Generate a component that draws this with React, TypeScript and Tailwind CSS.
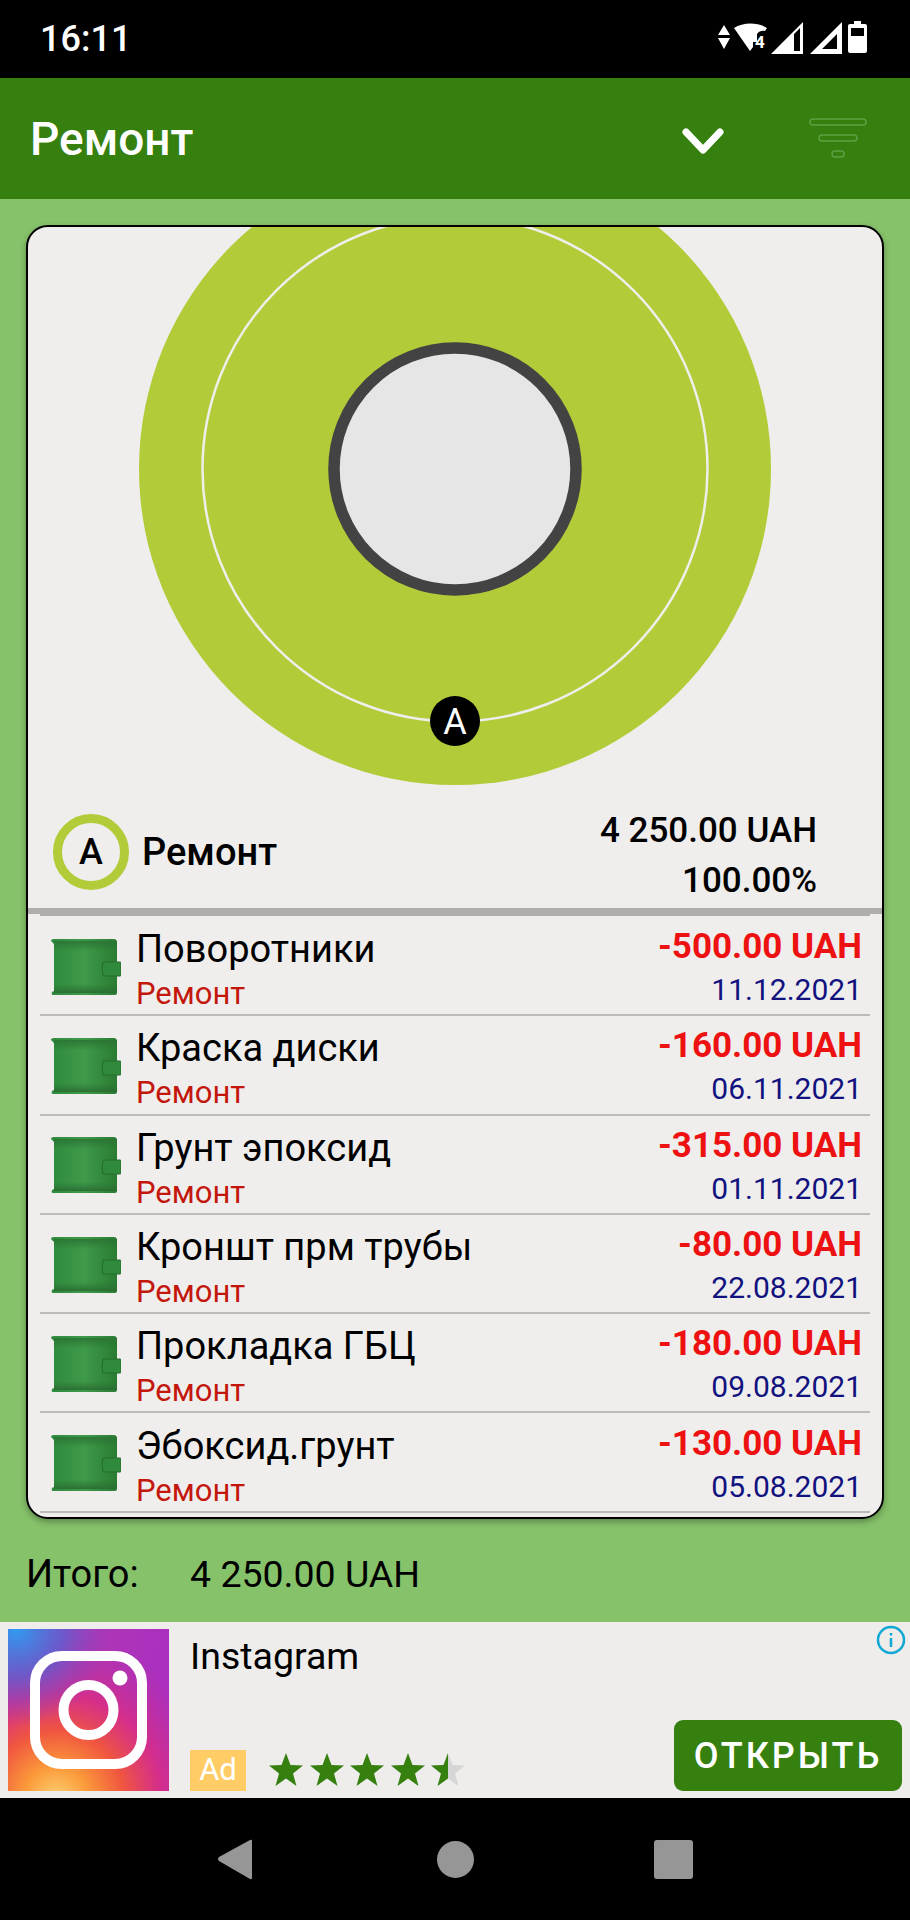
const font = "font-['Roboto','Liberation_Sans',sans-serif]";

const expenses = [
  { title: "Поворотники", amount: "-500.00 UAH", date: "11.12.2021" },
  { title: "Краска диски", amount: "-160.00 UAH", date: "06.11.2021" },
  { title: "Грунт эпоксид", amount: "-315.00 UAH", date: "01.11.2021" },
  { title: "Кроншт прм трубы", amount: "-80.00 UAH", date: "22.08.2021" },
  { title: "Прокладка ГБЦ", amount: "-180.00 UAH", date: "09.08.2021" },
  { title: "Эбоксид.грунт", amount: "-130.00 UAH", date: "05.08.2021" },
];

function StatusIcons() {
  return (
    <svg width="156" height="36" viewBox="0 0 156 36" fill="white">
      <path d="M8 1l6 10H2zM2 14h12L8 25z" transform="translate(0 3)" />
      <path d="M18 7c9-6 24-6 33 0l-2 3q-5-1-8 3v8h-4v5l-3 4z" />
      <text x="39" y="27" fontSize="17" fontWeight="700" fontFamily="Roboto">4</text>
      <path fillRule="evenodd" d="M55 31L87 -1v32zM84 5v23h-6V11z" transform="translate(0 2)" />
      <path fillRule="evenodd" d="M94 31L126 -1v32zM121 11L106 26h15z" transform="translate(0 2)" />
      <path fillRule="evenodd" d="M138 0h7v3h4q2 0 2 2v25q0 2-2 2h-15q-2 0-2-2V5q0-2 2-2h4zM135 7v8h13V7z" />
    </svg>
  );
}

function FilterIcon() {
  return (
    <svg width="60" height="42" viewBox="0 0 60 42" fill="none" stroke="#5da043" strokeWidth="1.5">
      <rect x="2" y="1" width="56" height="6" rx="3" />
      <rect x="11" y="17" width="38" height="6" rx="3" />
      <rect x="24" y="33" width="12" height="6" rx="3" />
    </svg>
  );
}

function DonutChart() {
  return (
    <svg className="block h-[574px] w-full" viewBox="0 0 854 574">
      <circle cx="427" cy="242" r="316" fill="#b2cb38" />
      <circle cx="427" cy="242" r="252.5" fill="none" stroke="#eeeeea" strokeWidth="2.5" />
      <circle cx="427" cy="242" r="121" fill="#e6e6e6" stroke="#434343" strokeWidth="11.5" />
      <circle cx="427" cy="494" r="25" fill="#000000" />
      <text x="427" y="507" textAnchor="middle" fontSize="36" fill="white" fontFamily="Roboto">
        A
      </text>
    </svg>
  );
}

function WalletIcon() {
  return (
    <svg width="70" height="58" viewBox="0 0 70 58" className="shrink-0">
      <defs>
        <linearGradient id="wallet" x1="0" y1="0" x2="1" y2="0">
          <stop offset="0" stopColor="#2e8a3c" />
          <stop offset="0.5" stopColor="#3f9a4a" />
          <stop offset="1" stopColor="#2a7c32" />
        </linearGradient>
        <linearGradient id="walletShade" x1="0" y1="0" x2="0" y2="1">
          <stop offset="0" stopColor="#2a7433" stopOpacity="0.9" />
          <stop offset="0.2" stopColor="#2a7433" stopOpacity="0" />
          <stop offset="0.82" stopColor="#2a7433" stopOpacity="0" />
          <stop offset="1" stopColor="#2a6a32" stopOpacity="0.9" />
        </linearGradient>
      </defs>
      <path d="M0 3q0-2 3-2h60q2 0 3 2v52q0 2-2 2H2q-2 0-1-3l2-1V6z" fill="url(#wallet)" />
      <path d="M3 3h63v52H3z" fill="url(#walletShade)" />
      <path d="M52 24h17q1 0 1 1v12q0 1-1 1H52q-2-7 0-14z" fill="#2f8a3b" stroke="#246c2c" strokeWidth="1" />
    </svg>
  );
}

function InstagramLogo() {
  return (
    <svg width="161" height="162" viewBox="0 0 161 162" className="shrink-0">
      <defs>
        <linearGradient id="igBase" x1="0" y1="0" x2="1" y2="0.15">
          <stop offset="0" stopColor="#b63fa8" />
          <stop offset="1" stopColor="#a92fc0" />
        </linearGradient>
        <radialGradient id="igWarm" cx="0.3" cy="1.05" r="1">
          <stop offset="0" stopColor="#fed373" />
          <stop offset="0.2" stopColor="#fb9a3a" />
          <stop offset="0.42" stopColor="#f0563f" />
          <stop offset="0.65" stopColor="#d92e85" stopOpacity="0.9" />
          <stop offset="1" stopColor="#c32c9c" stopOpacity="0" />
        </radialGradient>
        <radialGradient id="igBlue" cx="0.05" cy="0" r="0.6">
          <stop offset="0" stopColor="#2f9bf0" />
          <stop offset="0.5" stopColor="#5c5fd0" stopOpacity="0.8" />
          <stop offset="1" stopColor="#8a40c0" stopOpacity="0" />
        </radialGradient>
      </defs>
      <rect width="161" height="162" fill="url(#igBase)" />
      <rect width="161" height="162" fill="url(#igWarm)" />
      <rect width="161" height="162" fill="url(#igBlue)" />
      <rect x="27" y="27" width="107" height="108" rx="27" fill="none" stroke="white" strokeWidth="10" />
      <circle cx="80.5" cy="81" r="25" fill="none" stroke="white" strokeWidth="10" />
      <circle cx="112" cy="49" r="7.5" fill="white" />
    </svg>
  );
}

function Star({ half }: { half?: boolean }) {
  const points = "17,0 21.5,12 34,12.5 24,20.5 27.5,33 17,25.5 6.5,33 10,20.5 0,12.5 12.5,12";
  return (
    <svg width="34" height="33" viewBox="0 0 34 33">
      <defs>
        <clipPath id="starHalf">
          <rect x="0" y="0" width="17" height="33" />
        </clipPath>
      </defs>
      <polygon points={points} fill={half ? "#d6d6d6" : "#35800f"} />
      {half && <polygon points={points} fill="#35800f" clipPath="url(#starHalf)" />}
    </svg>
  );
}

export default function App() {
  return (
    <div className={`flex h-[1920px] w-[910px] flex-col overflow-hidden bg-black ${font}`}>
      <div className="flex h-[78px] shrink-0 items-center justify-between pl-[40px] pr-[38px]">
        <span className="text-[36px] font-medium leading-none text-white">16:11</span>
        <StatusIcons />
      </div>

      <header className="flex h-[121px] shrink-0 items-center bg-[#35800f] pl-[30px] pr-[42px]">
        <h1 className="text-[46px] font-medium leading-none text-white">Ремонт</h1>
        <svg width="42" height="26" viewBox="0 0 42 26" className="ml-auto mr-[84px] mt-[4px]" fill="none" stroke="white" strokeWidth="7" strokeLinecap="round" strokeLinejoin="round">
          <path d="M4 4l17 18L38 4" />
        </svg>
        <FilterIcon />
      </header>

      <main className="flex min-h-0 flex-1 flex-col bg-[#86c26a]">
        <section className="mx-[26px] mt-[26px] overflow-hidden rounded-[22px] border-2 border-black bg-[#efeeed] pb-[4px] shadow-[0_3px_6px_rgba(0,0,0,0.3)]">
          <DonutChart />

          <div className="flex h-[107px] items-start pl-[25px] pr-[65px] pt-[13px]">
            <div className="flex h-[76px] w-[76px] shrink-0 items-center justify-center rounded-full border-[9px] border-[#b2cb38] text-[36px] font-medium text-black">
              A
            </div>
            <span className="ml-[13px] mt-[19px] text-[38px] font-medium leading-none text-black">Ремонт</span>
            <div className="ml-auto text-right text-[35px] font-medium leading-[50px] text-black">
              <div className="-mt-[8px]">4 250.00 UAH</div>
              <div>100.00%</div>
            </div>
          </div>

          <div className="h-[6px] bg-[#b0aeac]" />
          <div className="mx-[12px] h-[2px] bg-[#b0aeac]" />

          <ul className="mt-[1px] flex flex-col px-[12px]">
            {expenses.map((item) => (
              <li key={item.date} className="flex h-[99.3px] items-center border-b-2 border-[#bcbbb9]">
                <div className="ml-[11px] mt-[2px]">
                  <WalletIcon />
                </div>
                <div className="ml-[15px] mt-[8px] flex flex-col">
                  <span className="text-[38px] leading-[44px] text-black">{item.title}</span>
                  <span className="mt-[5px] text-[31px] leading-[36px] text-[#c4170c]">Ремонт</span>
                </div>
                <div className="ml-auto mt-[2px] flex flex-col items-end pr-[8px]">
                  <span className="text-[35px] font-bold leading-[44px] text-[#ed1111]">{item.amount}</span>
                  <span className="mt-[3px] text-[30px] leading-[36px] text-[#12127f]">{item.date}</span>
                </div>
              </li>
            ))}
          </ul>
        </section>

        <div className="mt-[33px] flex pl-[26px] text-[38px] leading-[44px] text-black">
          <span className="w-[164px]">Итого:</span>
          <span className="text-[37.5px]">4 250.00 UAH</span>
        </div>
      </main>

      <aside className="relative flex h-[176px] shrink-0 bg-[#eeedeb] pl-[8px] pt-[7px]">
        <InstagramLogo />
        <div className="ml-[21px] flex flex-1 flex-col pr-[8px]">
          <span className="mt-[5px] text-[37.5px] leading-[44px] text-black">Instagram</span>
          <div className="mt-auto mb-[7px] flex items-end">
            <span className="flex h-[41px] w-[56px] items-center justify-center bg-[#ffcc66] text-[31px] text-white">Ad</span>
            <div className="ml-[23px] mb-[5px] flex gap-[6.5px]">
              <Star />
              <Star />
              <Star />
              <Star />
              <Star half />
            </div>
            <button type="button" className="ml-auto flex h-[71px] w-[228px] items-center justify-center rounded-[9px] bg-[#35800f] text-[36px] font-medium tracking-[3px] text-white">
              ОТКРЫТЬ
            </button>
          </div>
        </div>
        <svg width="30" height="30" viewBox="0 0 30 30" className="absolute right-[4px] top-[3px]" fill="none" stroke="#12a8d4" strokeWidth="2.5">
          <circle cx="15" cy="15" r="13" />
          <path d="M15 13v9M15 8v2.5" />
        </svg>
      </aside>

      <nav className="flex h-[122px] shrink-0 items-start justify-center pt-[41px]">
        <div className="flex items-center gap-[0px]">
          <svg width="36" height="41" viewBox="0 0 36 41" className="mr-[184px]" fill="#969696">
            <path d="M35 2q0-2-2-1L2 18q-2 2 0 4l31 18q2 1 2-1z" />
          </svg>
          <div className="mr-[180px] h-[37px] w-[37px] rounded-full bg-[#969696]" />
          <div className="h-[39px] w-[39px] rounded-[3px] bg-[#969696]" />
        </div>
      </nav>
    </div>
  );
}
